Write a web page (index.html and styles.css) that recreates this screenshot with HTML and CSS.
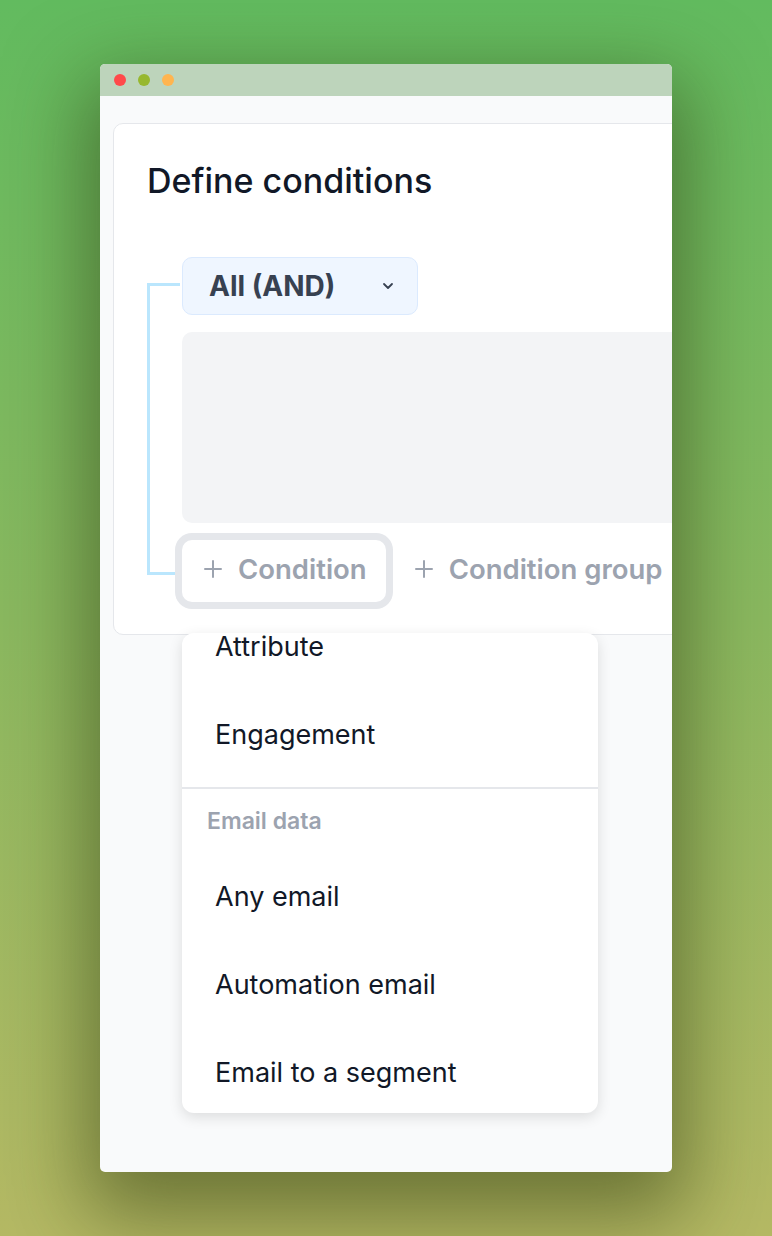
FILE: index.html
```html
<!DOCTYPE html>
<html lang="en">
    <head>
        <meta charset="UTF-8">
        <meta name="viewport" content="width=device-width, initial-scale=1.0">
        <title>Define conditions</title>
        <link rel="stylesheet" href="styles.css">
    </head>
    <body>
        <div class="window">
            <!-- window title bar -->
            <div class="titlebar">
                <span class="dot dot-red"></span>
                <span class="dot dot-green"></span>
                <span class="dot dot-orange"></span>
            </div>
            <div class="content">
                <div class="card">
                    <h1 class="card-title">Define conditions</h1>
                    <div class="group">
                        <div class="connector"></div>
                        <div class="group-body">
                            <button class="operator">
                                <span>All (AND)</span>
                                <svg width="12" height="8" viewBox="0 0 12 8"><path d="M2 2l4 4 4-4" fill="none" stroke="#374151" stroke-width="1.8" stroke-linecap="round" stroke-linejoin="round"/></svg>
                            </button>
                            <div class="conditions"></div>
                            <div class="actions">
                                <div class="add-wrap">
                                    <button class="add add-active">
                                        <svg width="18" height="18" viewBox="0 0 18 18"><path d="M9 1v16M1 9h16" stroke="#9ca3af" stroke-width="2" stroke-linecap="round"/></svg>
                                        <span>Condition</span>
                                    </button>
                                    <!-- dropdown menu, list scrolled a little -->
                                    <div class="menu">
                                        <div class="menu-section">
                                            <div class="menu-item menu-item-top">Attribute</div>
                                            <div class="menu-item">Engagement</div>
                                        </div>
                                        <div class="menu-header">Email data</div>
                                        <div class="menu-item">Any email</div>
                                        <div class="menu-item">Automation email</div>
                                        <div class="menu-item">Email to a segment</div>
                                    </div>
                                </div>
                                <button class="add">
                                    <svg width="18" height="18" viewBox="0 0 18 18"><path d="M9 1v16M1 9h16" stroke="#9ca3af" stroke-width="2" stroke-linecap="round"/></svg>
                                    <span>Condition group</span>
                                </button>
                            </div>
                        </div>
                    </div>
                </div>
            </div>
        </div>
    </body>
</html>
```

FILE: styles.css
```css
*{
    margin: 0;
    padding: 0;
    box-sizing: border-box;
}
body{
    width: 772px;
    height: 1236px;
    padding: 64px 0 0 100px;
    background: linear-gradient(180deg, #62bb5f 0%, #8ab85f 50%, #b5b964 100%);
    font-family: Inter, "Noto Sans", sans-serif;
    overflow: hidden;
}
.window{
    width: 572px;
    height: 1108px;
    border-radius: 5px;
    overflow: hidden;
    background-color: #f9fafb;
    box-shadow: 0 30px 80px 14px rgba(40, 50, 10, 0.5);
    display: flex;
    flex-direction: column;
}
.titlebar{
    height: 32px;
    flex-shrink: 0;
    background-color: #bdd4bb;
    display: flex;
    align-items: center;
    gap: 12px;
    padding-left: 14px;
}
.dot{
    width: 12px;
    height: 12px;
    border-radius: 50%;
}
.dot-red{ background-color: #ff4a4a; }
.dot-green{ background-color: #97b82f; }
.dot-orange{ background-color: #ffb54f; }
.content{
    padding: 27px 0 0 13px;
}
.card{
    width: 640px;
    background-color: #fff;
    border: 1px solid #e5e7eb;
    border-radius: 10px;
    padding: 37px 0 32px 33px;
}
.card-title{
    font-size: 34px;
    line-height: 40px;
    font-weight: 500;
    color: #111827;
    margin-bottom: 56px;
}
.group{
    display: flex;
}
/* tree connector line */
.connector{
    width: 33px;
    margin: 26px 2px 27px 0;
    border: 3px solid #bae6fd;
    border-right: none;
}
.group-body{
    flex: 1;
    display: flex;
    flex-direction: column;
    gap: 17px;
}
.operator{
    width: 236px;
    height: 58px;
    display: flex;
    align-items: center;
    justify-content: space-between;
    padding: 0 23px 0 26px;
    background-color: #eff6ff;
    border: 1px solid #dbeafe;
    border-radius: 10px;
    font-family: inherit;
    font-size: 28px;
    font-weight: 700;
    color: #374151;
}
.conditions{
    height: 191px;
    background-color: #f3f4f6;
    border-radius: 10px;
}
.actions{
    display: flex;
    gap: 7px;
}
.add-wrap{
    position: relative;
}
.add{
    height: 62px;
    display: flex;
    align-items: center;
    gap: 16px;
    padding: 0 19px 4px 22px;
    background: none;
    border: none;
    border-radius: 10px;
    font-family: inherit;
    font-size: 27.5px;
    font-weight: 600;
    color: #9ca3af;
}
.add-active{
    background-color: #fff;
    box-shadow: 0 0 0 7px #e5e7eb;
}
.menu{
    position: absolute;
    top: 93px;
    left: 0;
    z-index: 2;
    width: 416px;
    height: 480px;
    overflow: hidden;
    background-color: #fff;
    border-radius: 12px;
    box-shadow: 0 4px 14px rgba(0, 0, 0, 0.12);
}
.menu-section{
    padding-bottom: 8px;
    border-bottom: 2px solid #e5e7eb;
}
.menu-item{
    padding: 30px 0 30px 33px;
    line-height: 28px;
    font-size: 27px;
    color: #111827;
}
.menu-item-top{
    padding-top: 0;
}
.menu-header{
    height: 64px;
    display: flex;
    align-items: center;
    padding-left: 25px;
    font-size: 23px;
    font-weight: 600;
    color: #9ca3af;
}
```
